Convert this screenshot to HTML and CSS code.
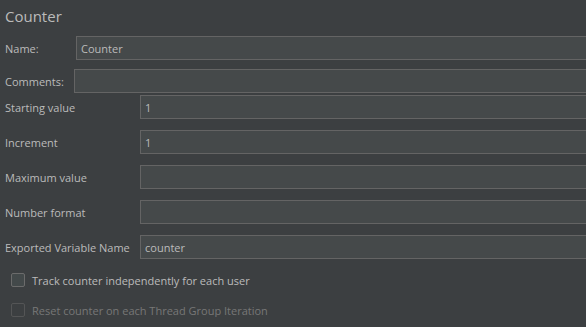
FILE: index.html
```html
<!DOCTYPE html>
<html lang="en">
<head>
    <meta charset="UTF-8">
    <meta name="viewport" content="width=device-width, initial-scale=1.0">
    <title>Counter</title>
    <link rel="stylesheet" href="styles.css">
</head>
<body>
    <div class="panel">
        <h1>Counter</h1>

        <div class="row name-row">
            <label class="name-label">Name:</label>
            <input type="text" class="field" value="Counter">
        </div>
        <div class="row comments-row">
            <label class="comments-label">Comments:</label>
            <input type="text" class="field" value="">
        </div>

        <div class="settings">
            <div class="row setting">
                <label>Starting value</label>
                <input type="text" class="field" value="1">
            </div>
            <div class="row setting">
                <label>Increment</label>
                <input type="text" class="field" value="1">
            </div>
            <div class="row setting">
                <label>Maximum value</label>
                <input type="text" class="field" value="">
            </div>
            <div class="row setting">
                <label>Number format</label>
                <input type="text" class="field" value="">
            </div>
            <div class="row setting">
                <label>Exported Variable Name</label>
                <input type="text" class="field" value="counter">
            </div>
        </div>

        <div class="check">
            <span class="box"></span>
            <span>Track counter independently for each user</span>
        </div>
        <div class="check disabled">
            <span class="box"></span>
            <span>Reset counter on each Thread Group Iteration</span>
        </div>
    </div>
</body>
</html>
```

FILE: styles.css
```css
body {
    margin: 0;
    background-color: #3c3f41;
    color: #bbbbbb;
    font-family: "Open Sans", "Noto Sans", sans-serif;
    font-size: 11px;
    overflow: hidden;
}
.panel {
    padding: 4px 0 0 5px;
    margin-right: -20px;
}
h1 {
    margin: 0;
    font-weight: normal;
    font-size: 15px;
    line-height: 24px;
    height: 32px;
}
.row {
    display: flex;
    align-items: center;
    height: 24px;
    white-space: nowrap;
}
.row label { flex: none; }
.field {
    flex: 1;
    box-sizing: border-box;
    height: 24px;
    margin: 0;
    padding: 0 4px;
    background-color: #45494a;
    border: 1px solid #646464;
    color: #bbbbbb;
    font: inherit;
    outline: none;
}
.name-label { width: 71px; }
.comments-row { margin-top: 9px; }
.comments-label { width: 69px; }
.settings {
    margin-top: 2px;
    display: flex;
    flex-direction: column;
    gap: 11px;
}
.setting label { width: 135px; }
.check {
    display: flex;
    align-items: center;
    gap: 7px;
    height: 14px;
    margin: 14px 0 0 6px;
    white-space: nowrap;
}
.check + .check { margin-top: 16px; }
.box {
    box-sizing: border-box;
    width: 14px;
    height: 14px;
    border: 1px solid #6b6b6b;
    border-radius: 2px;
    background-color: #43494a;
}
.disabled { color: #777777; }
.disabled .box {
    border-color: #545556;
    background-color: #3c3f41;
}
```
